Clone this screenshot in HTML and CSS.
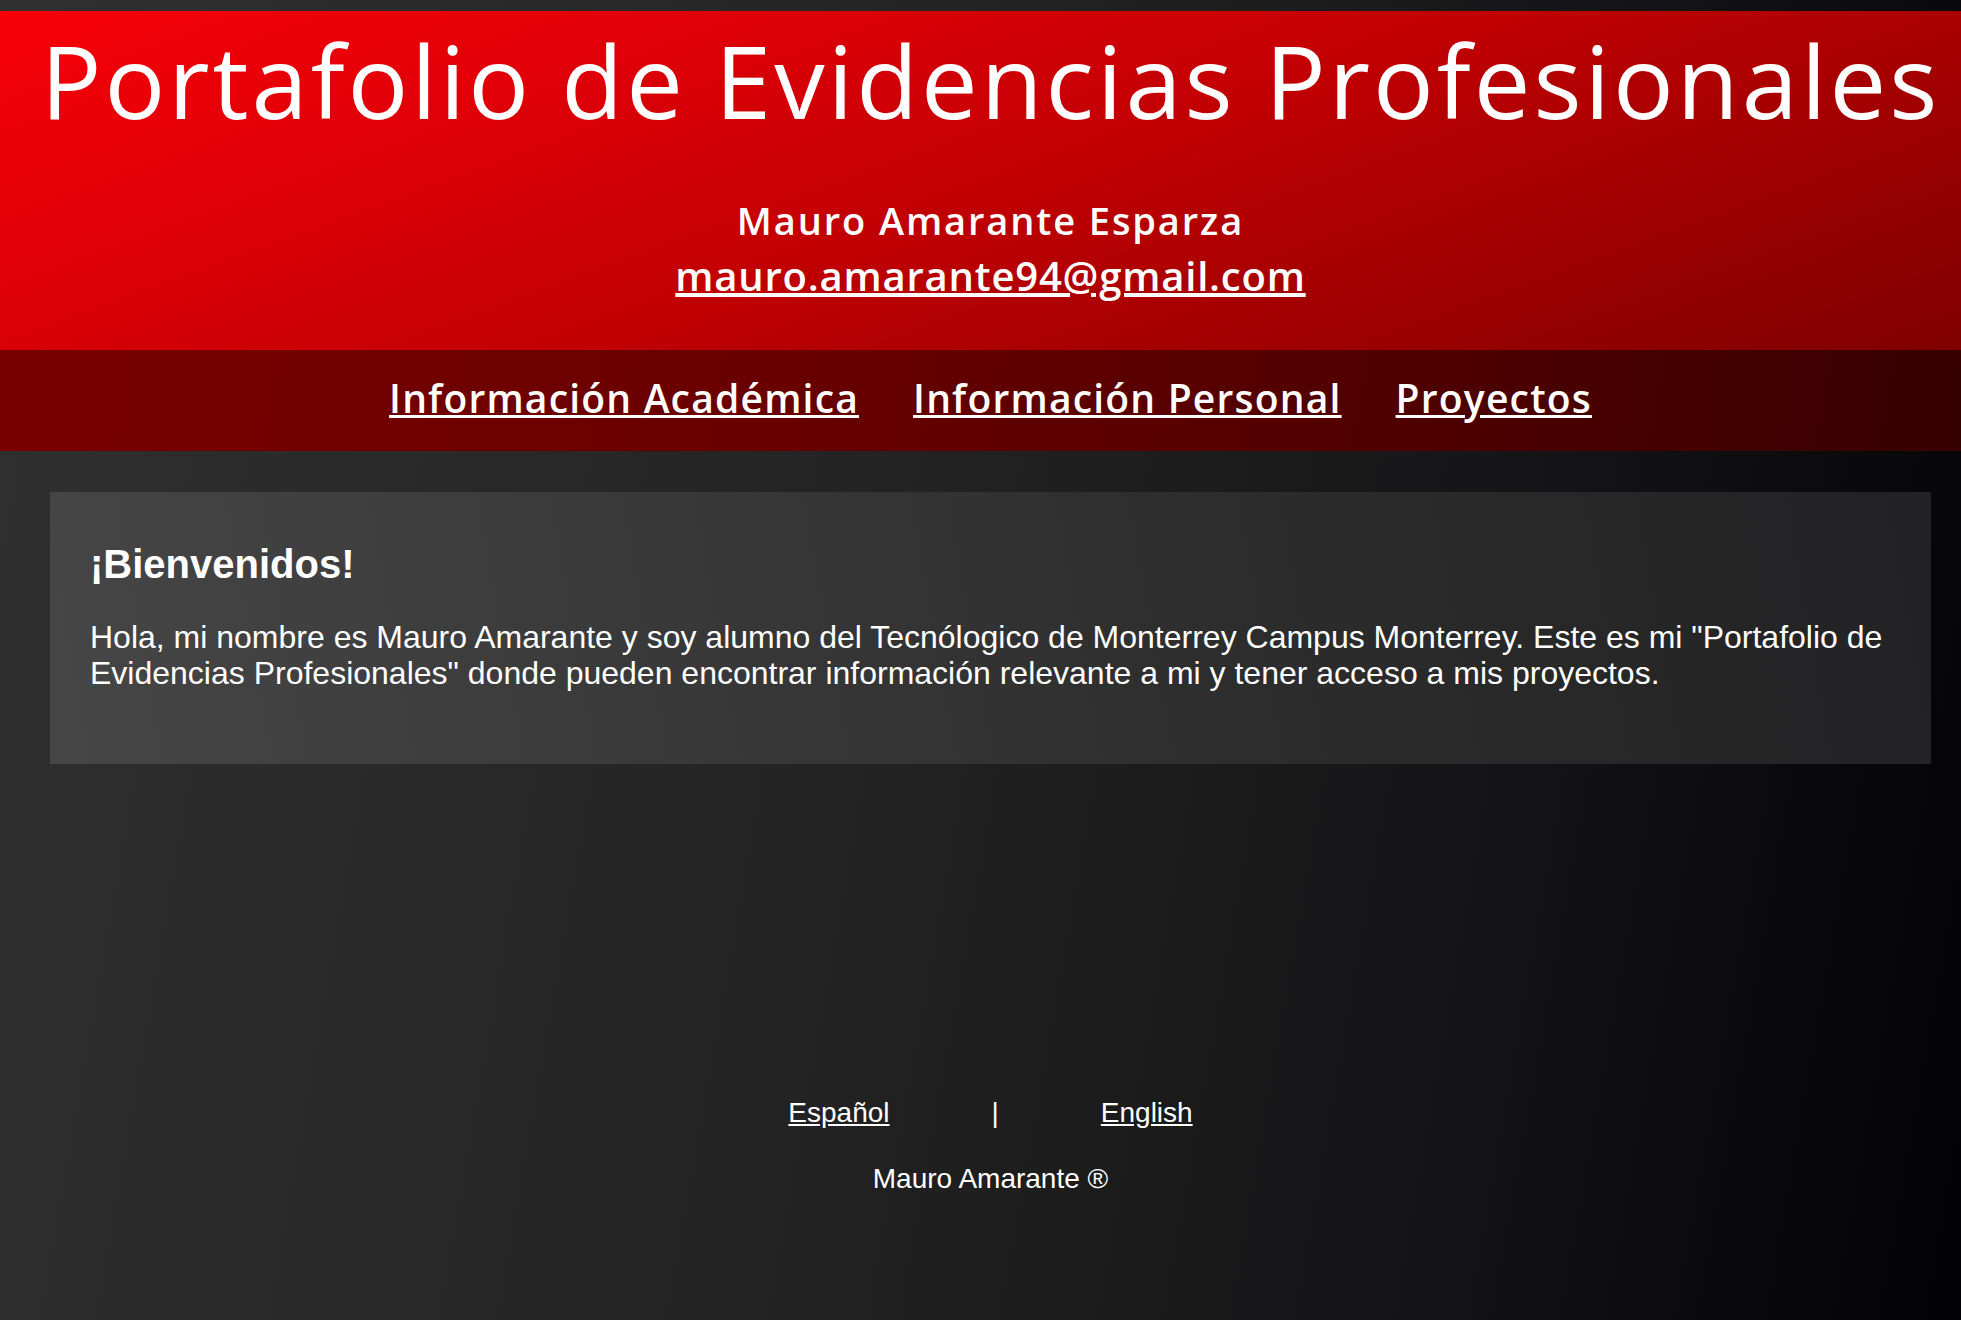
FILE: index.html
```html
<!DOCTYPE html>
<html lang="es">
<head>
<meta charset="utf-8">
<title>Portafolio de Evidencias Profesionales</title>
<link rel="stylesheet" href="styles.css">
</head>
<body>
<div class="page">
  <header class="hero">
    <h1 class="title">Portafolio de Evidencias Profesionales</h1>
    <p class="name">Mauro Amarante Esparza</p>
    <p class="mail-line"><a class="email" href="#">mauro.amarante94@gmail.com</a></p>
  </header>
  <nav class="nav">
    <a class="nav-link" href="#">Información Académica</a>
    <a class="nav-link" href="#">Información Personal</a>
    <a class="nav-link" href="#">Proyectos</a>
  </nav>
  <main class="content">
    <section class="panel">
      <h2 class="panel-title">¡Bienvenidos!</h2>
      <p class="panel-text">Hola, mi nombre es Mauro Amarante y soy alumno del Tecnólogico de Monterrey Campus Monterrey. Este es mi "Portafolio de Evidencias Profesionales" donde pueden encontrar información relevante a mi y tener acceso a mis proyectos.</p>
    </section>
  </main>
  <footer class="footer">
    <div class="langs">
      <a class="lang" href="#">Español</a>
      <span class="sep">|</span>
      <a class="lang" href="#">English</a>
    </div>
    <p class="copy">Mauro Amarante ®</p>
  </footer>
</div>
</body>
</html>
```
FILE: styles.css
```css
html {
  overflow: hidden;
  min-height: 100%;
  background: linear-gradient(100deg, #303030 0%, #232323 45%, #141416 75%, #020204 100%);
}

body {
  margin: 0;
  min-height: 1320px;
  color: #fff;
  font-family: "Liberation Sans", Arial, sans-serif;
}

.page {
  width: 1981px;
  padding-top: 11px;
}

.hero {
  background: linear-gradient(160deg, #f70008 0%, #e00008 25%, #c20004 50%, #a00000 75%, #7e0000 100%);
  text-align: center;
  padding: 9px 0 47px;
  font-family: "Open Sans", "DejaVu Sans", sans-serif;
}

.title {
  margin: 0;
  font-size: 101px;
  line-height: 121px;
  font-weight: 400;
  letter-spacing: 3px;
}

.name {
  margin: 52px 0 0;
  font-size: 38px;
  line-height: 55px;
  font-weight: 600;
  letter-spacing: 1.9px;
}

.mail-line {
  margin: 0;
  font-size: 40px;
  line-height: 55px;
  font-weight: 600;
  letter-spacing: 0.8px;
}

.email {
  color: #fff;
}

.nav {
  display: flex;
  justify-content: center;
  gap: 54px;
  background: linear-gradient(100deg, #7a0000 0%, #680000 40%, #500000 70%, #360000 100%);
  font-family: "Open Sans", "DejaVu Sans", sans-serif;
  font-size: 39px;
  font-weight: 600;
  letter-spacing: 1.2px;
  line-height: 96px;
  padding-bottom: 5px;
}

.nav-link {
  color: #fff;
}

.content {
  padding: 41px 50px 0;
}

.panel {
  background: linear-gradient(80deg, #464646 0%, #3a3a3a 30%, #2c2c2c 65%, #222224 100%);
  padding: 50px 20px 73px 40px;
}

.panel-title {
  margin: 0;
  font-size: 40px;
  line-height: 44px;
  font-weight: 700;
}

.panel-text {
  margin: 33px 0 0;
  font-size: 32px;
  line-height: 36px;
}

.footer {
  margin-top: 332px;
  text-align: center;
  font-size: 28px;
}

.langs {
  display: flex;
  justify-content: center;
  gap: 102px;
  line-height: 34px;
}

.lang {
  color: #fff;
}

.copy {
  margin: 32px 0 0;
  line-height: 34px;
}
```
